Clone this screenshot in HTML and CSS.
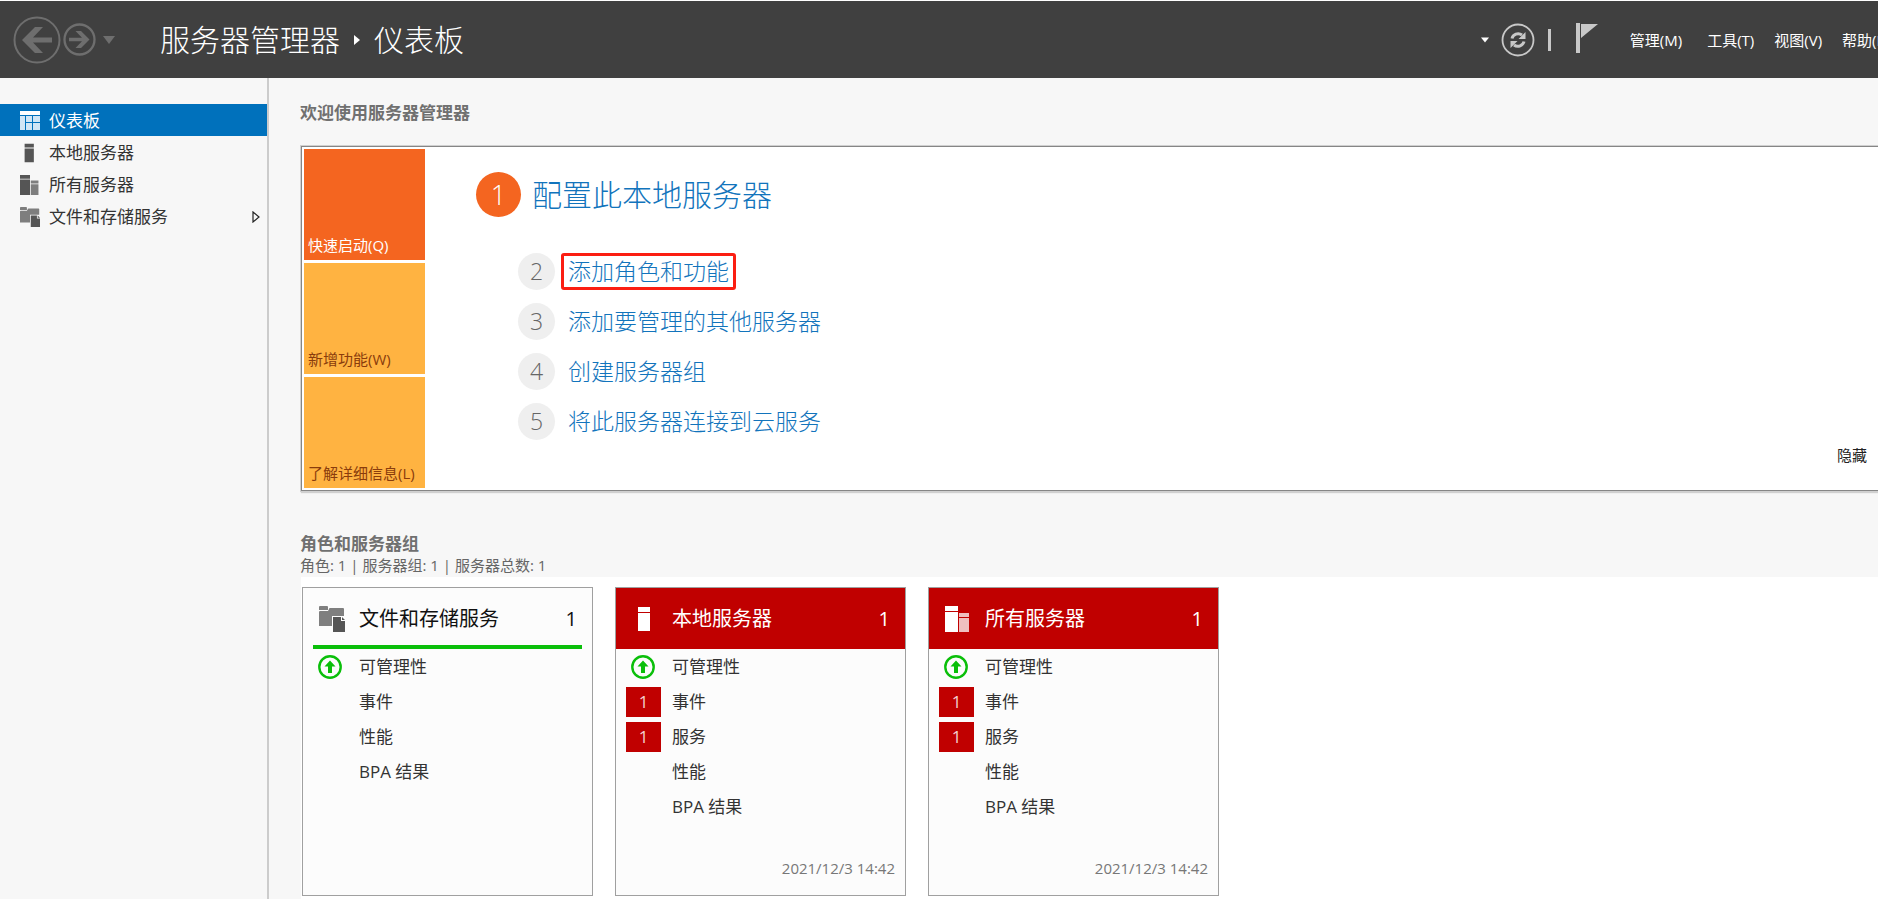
FILE: index.html
```html
<!DOCTYPE html>
<html lang="zh-CN">
<head>
<meta charset="utf-8">
<title>服务器管理器 - 仪表板</title>
<link rel="stylesheet" href="styles.css">
</head>
<body>
<svg class="defs" aria-hidden="true">
  <symbol id="i-server" viewBox="0 0 26 26">
    <path d="M6 1h12v5H6zM6 7h12v18H6z"/>
  </symbol>
  <symbol id="i-servers" viewBox="0 0 26 26">
    <path d="M0 0h13v5H0zM0 6h13v20H0z"/>
    <path class="soft" d="M14 7h10v4H14zM14 12h10v14H14z"/>
  </symbol>
  <symbol id="i-files" viewBox="0 0 26 26">
    <path class="soft" d="M1 0h7q1 0 1 1v3H0V1q0-1 1-1zM11 2h13q1 0 1 1v7H13v10H0V6q0-1 1-1h8l1-2q0-1 1-1z"/>
    <path d="M14 11h8v4h4v11H14zM23 11l3 3h-3z"/>
  </symbol>
  <symbol id="i-up" viewBox="0 0 24 24">
    <circle cx="12" cy="12" r="10.7" fill="none" stroke="#0abf0a" stroke-width="2.4"/>
    <path fill="#0abf0a" d="M12 5.500l5.500 6h-3.500v6.500h-4v-6.500H6.500z"/>
  </symbol>
</svg>

<header class="topbar">
  <div class="history">
    <button class="icon-btn" aria-label="后退">
      <svg width="48" height="48" viewBox="0 0 48 48"><circle cx="24" cy="24" r="22.500" fill="none" stroke="#6e6e6e" stroke-width="2"/><path fill="#6e6e6e" d="M9 24L22 11h8L20 21.500h19v5H20L30 37h-8z"/></svg>
    </button>
    <button class="icon-btn" aria-label="前进">
      <svg width="33" height="33" viewBox="0 0 33 33"><circle cx="16.500" cy="16.500" r="15" fill="none" stroke="#6e6e6e" stroke-width="2.300"/><path fill="#6e6e6e" d="M26.500 16.500L18 8h-5.500l6.500 6.800H6v3.400h13L12.500 25H18z"/></svg>
    </button>
    <button class="icon-btn recent" aria-label="历史记录">
      <svg width="12" height="8" viewBox="0 0 12 8"><path fill="#6e6e6e" d="M0 0h12L6 8z"/></svg>
    </button>
  </div>
  <h1 class="crumbs">
    <span>服务器管理器</span>
    <svg width="6" height="10" viewBox="0 0 6 10"><path fill="#fff" d="M0 0l6 5-6 5z"/></svg>
    <span>仪表板</span>
  </h1>
  <div class="tools">
    <button class="icon-btn" aria-label="展开"><svg width="8" height="6" viewBox="0 0 8 6"><path fill="#fff" d="M0 .500h8L4 5.500z"/></svg></button>
    <button class="icon-btn refresh" aria-label="刷新">
      <svg width="34" height="34" viewBox="0 0 34 34"><circle cx="17" cy="17" r="15.500" fill="none" stroke="#c8c8c8" stroke-width="1.800"/><path fill="none" stroke="#c8c8c8" stroke-width="3" d="M11 15.500c1-4 6-6.500 10-3.500M23 18.500c-1 4-6 6.500-10 3.500"/><path fill="#c8c8c8" d="M24.500 9v7h-7zM9.500 25v-7h7z"/></svg>
    </button>
    <span class="divider"></span>
    <button class="icon-btn flag" aria-label="通知">
      <svg width="22" height="30" viewBox="0 0 22 30"><path fill="#c8c8c8" d="M0 0h4v30H0zM5 1h17L5 15z"/></svg>
    </button>
    <nav class="menu">
      <a class="wide" href="#">管理(M)</a>
      <a href="#">工具(T)</a>
      <a href="#">视图(V)</a>
      <a href="#">帮助(H)</a>
    </nav>
  </div>
</header>

<div class="body">
  <nav class="sidebar">
    <a class="nav active" href="#">
      <svg width="20" height="20" viewBox="0 0 20 20"><path fill="#fff" d="M0 0h20v4H0z"/><path fill="#d2e6f5" d="M0 5h5v14H0zM6 5h6v6H6zM13 5h7v6h-7zM6 12h6v7H6zM13 12h7v7h-7z"/></svg>
      <span>仪表板</span>
    </a>
    <a class="nav" href="#"><svg width="20" height="20"><use href="#i-server"/></svg><span>本地服务器</span></a>
    <a class="nav" href="#"><svg width="20" height="20"><use href="#i-servers"/></svg><span>所有服务器</span></a>
    <a class="nav" href="#"><svg width="20" height="20"><use href="#i-files"/></svg><span>文件和存储服务</span>
      <svg class="expand" width="8" height="12" viewBox="0 0 8 12"><path fill="none" stroke="#222" stroke-width="1.200" d="M1 1l6 5-6 5z"/></svg></a>
  </nav>

  <main class="main">
    <h2 class="section-title">欢迎使用服务器管理器</h2>
    <section class="welcome">
      <div class="tiles">
        <button class="tile current">快速启动(Q)</button>
        <button class="tile">新增功能(W)</button>
        <button class="tile">了解详细信息(L)</button>
      </div>
      <div class="steps">
        <div class="step first"><span class="num">1</span><a href="#">配置此本地服务器</a></div>
        <ol class="substeps">
          <li class="step"><span class="num">2</span><a class="marked" href="#">添加角色和功能</a></li>
          <li class="step"><span class="num">3</span><a href="#">添加要管理的其他服务器</a></li>
          <li class="step"><span class="num">4</span><a href="#">创建服务器组</a></li>
          <li class="step"><span class="num">5</span><a href="#">将此服务器连接到云服务</a></li>
        </ol>
      </div>
      <button class="hide">隐藏</button>
    </section>

    <h2 class="section-title groups-title">角色和服务器组</h2>
    <p class="summary">角色: 1 | 服务器组: 1 | 服务器总数: 1</p>

    <div class="cards">
      <article class="card ok">
        <h3 class="card-head"><svg width="26" height="26"><use href="#i-files"/></svg><span>文件和存储服务</span><span class="count">1</span></h3>
        <ul class="rows">
          <li><span class="state"><svg width="24" height="24"><use href="#i-up"/></svg></span>可管理性</li>
          <li><span class="state"></span>事件</li>
          <li><span class="state"></span>性能</li>
          <li><span class="state"></span>BPA 结果</li>
        </ul>
      </article>
      <article class="card alert">
        <h3 class="card-head"><svg width="26" height="26"><use href="#i-server"/></svg><span>本地服务器</span><span class="count">1</span></h3>
        <ul class="rows">
          <li><span class="state"><svg width="24" height="24"><use href="#i-up"/></svg></span>可管理性</li>
          <li><span class="state badge">1</span>事件</li>
          <li><span class="state badge">1</span>服务</li>
          <li><span class="state"></span>性能</li>
          <li><span class="state"></span>BPA 结果</li>
        </ul>
        <time class="date">2021/12/3 14:42</time>
      </article>
      <article class="card alert">
        <h3 class="card-head"><svg width="26" height="26"><use href="#i-servers"/></svg><span>所有服务器</span><span class="count">1</span></h3>
        <ul class="rows">
          <li><span class="state"><svg width="24" height="24"><use href="#i-up"/></svg></span>可管理性</li>
          <li><span class="state badge">1</span>事件</li>
          <li><span class="state badge">1</span>服务</li>
          <li><span class="state"></span>性能</li>
          <li><span class="state"></span>BPA 结果</li>
        </ul>
        <time class="date">2021/12/3 14:42</time>
      </article>
    </div>
  </main>
</div>
</body>
</html>
```

FILE: styles.css
```css
* { box-sizing: border-box; }
body {
  margin: 0;
  min-height: 100vh;
  display: flex;
  flex-direction: column;
  overflow: hidden;
  background: #f7f7f7;
  color: #333;
  font: 17px/24px "Open Sans", "Noto Sans CJK SC", sans-serif;
  white-space: nowrap;
}
h1, h2, h3, p, ul, ol { margin: 0; padding: 0; font-weight: 400; list-style: none; }
a { color: inherit; text-decoration: none; }
button { margin: 0; padding: 0; border: 0; background: none; color: inherit; font: inherit; cursor: pointer; }
svg { display: block; flex: none; }
.defs { position: absolute; width: 0; height: 0; }

/* Title bar */
.topbar {
  display: flex;
  align-items: center;
  height: 78px;
  padding-left: 13px;
  border-top: 1px solid #fff;
  background: #404040;
  color: #fff;
  overflow: hidden;
}
.history { display: flex; align-items: center; gap: 2px; }
.recent { margin-left: 5px; }
.crumbs {
  display: flex;
  align-items: center;
  gap: 14px;
  margin-left: 45px;
  font-size: 30px;
  line-height: 40px;
  font-weight: 300;
}
.tools { display: flex; align-items: center; flex: none; margin: 0 -14px 0 auto; }
.refresh { margin-left: 12px; }
.divider { width: 3px; height: 22px; margin: 0 25px 0 13px; background: #c8c8c8; }
.flag { padding-bottom: 4px; }
.menu { display: flex; gap: 20px; margin-left: 32px; font-size: 15px; }
.wide { margin-right: 5px; }

/* Navigation */
.body { display: flex; flex: 1; }
.sidebar { flex: none; width: 269px; padding-top: 26px; border-right: 2px solid #ccc; }
.nav { display: flex; align-items: center; gap: 9px; height: 32px; padding: 1px 7px 0 20px; fill: #555; }
.active { background: #0071bc; color: #fff; }
.expand { margin-left: auto; }
.soft { opacity: .75; }

/* Dashboard */
.main { flex: 1; min-width: 0; display: flex; flex-direction: column; padding: 23px 0 0 31px; }
.section-title { font-size: 17px; font-weight: 700; color: #707070; }
.welcome {
  display: flex;
  margin: 21px 0 0 1px;
  padding: 2px 11px 2px 2px;
  border: solid #868686;
  border-width: 1px 0 1px 1px;
  box-shadow: 0 0 0 1px #d0d0d0, 0 2px 1px #d0d0d0;
  background: #fff;
}
.tiles { display: grid; grid-auto-rows: 111px; gap: 3px; flex: none; width: 121px; }
.tile {
  display: flex;
  align-items: flex-end;
  padding: 0 0 5px 4px;
  background: #ffb341;
  color: #8a3c0c;
  font-size: 15px;
  line-height: 20px;
}
.current { background: #f46520; color: #fff; }
.steps { flex: 1; padding: 23px 0 0 51px; color: #1274bc; }
.substeps { display: grid; gap: 13px; padding: 36px 0 0 42px; }
.step { display: flex; align-items: center; font-size: 23px; line-height: 31px; font-weight: 300; }
.num {
  width: 37px;
  height: 37px;
  margin-right: 6px;
  border-radius: 50%;
  background: #efefef;
  color: #666;
  line-height: 37px;
  text-align: center;
}
.step a { border: 3px solid transparent; border-radius: 3px; padding: 0 4px; }
.step .marked { border-color: #fb1e12; }
.first { font-size: 30px; line-height: 39px; }
.first .num { width: 45px; height: 45px; margin-right: 4px; background: #f46520; color: #fff; font-size: 27px; line-height: 45px; }
.hide { align-self: flex-end; padding-bottom: 21px; color: #222; font-size: 15px; }

.groups-title { margin-top: 42px; line-height: 22px; }
.summary { color: #666; font-size: 15px; line-height: 20px; }
.cards { display: flex; align-items: flex-start; flex: 1; gap: 22px; margin: 2px 0 0 1px; padding: 10px 0 2px 1px; background: #fff; }
.card {
  display: flex;
  flex-direction: column;
  width: 291px;
  min-height: 309px;
  border: 1px solid #a0a0a0;
  background: #fcfcfc;
}
.card-head { display: flex; align-items: center; height: 61px; padding: 1px 15px 0 16px; font-size: 20px; line-height: 28px; gap: 14px; }
.count { margin-left: auto; }
.ok .card-head { margin: 0 10px; padding: 4px 5px 0 6px; border-bottom: 4px solid #0abf0a; color: #111; fill: #555; }
.alert .card-head { background: #c00000; color: #fff; fill: #fff; }
.rows { display: grid; gap: 5px; padding: 3px 10px; }
.rows li { display: flex; align-items: center; gap: 11px; height: 30px; }
.state { width: 35px; padding-left: 5px; }
.badge { height: 30px; padding: 0; background: #c00000; color: #f3d0d0; line-height: 30px; text-align: center; }
.date { margin: auto 10px 15px auto; color: #777; font-size: 15px; }
```
